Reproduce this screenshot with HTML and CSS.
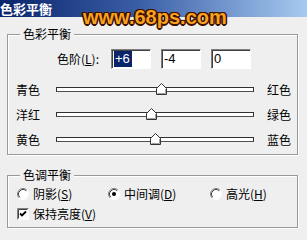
FILE: index.html
```html
<!DOCTYPE html>
<html lang="zh-CN">
<head>
<meta charset="utf-8">
<title>色彩平衡</title>
<link rel="stylesheet" href="styles.css">
</head>
<body>
<div class="window">
  <div class="titlebar">色彩平衡</div>
  <div class="watermark">www.68ps.com</div>
  <div class="dialog">
    <fieldset class="group group-color">
      <legend>色彩平衡</legend>
      <div class="levels">
        <span class="levels-label">色阶(<u>L</u>):</span>
        <div class="field"><span class="sel">+6</span></div>
        <div class="field">-4</div>
        <div class="field">0</div>
      </div>
      <div class="slider-row">
        <span class="s-left">青色</span>
        <div class="track"><div class="thumb" style="left:53%"><svg width="11" height="12" viewBox="0 0 11 12"><polygon points="5.5,0.5 10.5,5.5 10.5,11.5 0.5,11.5 0.5,5.5" fill="#fff" stroke="#333"/><polyline points="9.5,6 9.5,10.5 1.5,10.5" fill="none" stroke="#a0a0a0"/></svg></div></div>
        <span class="s-right">红色</span>
      </div>
      <div class="slider-row">
        <span class="s-left">洋红</span>
        <div class="track"><div class="thumb" style="left:48%"><svg width="11" height="12" viewBox="0 0 11 12"><polygon points="5.5,0.5 10.5,5.5 10.5,11.5 0.5,11.5 0.5,5.5" fill="#fff" stroke="#333"/><polyline points="9.5,6 9.5,10.5 1.5,10.5" fill="none" stroke="#a0a0a0"/></svg></div></div>
        <span class="s-right">绿色</span>
      </div>
      <div class="slider-row">
        <span class="s-left">黄色</span>
        <div class="track"><div class="thumb" style="left:50%"><svg width="11" height="12" viewBox="0 0 11 12"><polygon points="5.5,0.5 10.5,5.5 10.5,11.5 0.5,11.5 0.5,5.5" fill="#fff" stroke="#333"/><polyline points="9.5,6 9.5,10.5 1.5,10.5" fill="none" stroke="#a0a0a0"/></svg></div></div>
        <span class="s-right">蓝色</span>
      </div>
    </fieldset>

    <fieldset class="group group-tone">
      <legend>色调平衡</legend>
      <div class="radios">
        <div class="option">
          <svg class="radio" width="12" height="12" viewBox="0 0 12 12"><circle cx="6" cy="6" r="5" fill="#fff"/><path d="M2.11 9.89 A5.5 5.5 0 0 1 9.89 2.11" fill="none" stroke="#808080"/><path d="M2.82 9.18 A4.5 4.5 0 0 1 9.18 2.82" fill="none" stroke="#404040"/><path d="M9.89 2.11 A5.5 5.5 0 0 1 2.11 9.89" fill="none" stroke="#fff"/></svg>
          <span>阴影(<u>S</u>)</span>
        </div>
        <div class="option">
          <svg class="radio" width="12" height="12" viewBox="0 0 12 12"><circle cx="6" cy="6" r="5" fill="#fff"/><path d="M2.11 9.89 A5.5 5.5 0 0 1 9.89 2.11" fill="none" stroke="#808080"/><path d="M2.82 9.18 A4.5 4.5 0 0 1 9.18 2.82" fill="none" stroke="#404040"/><path d="M9.89 2.11 A5.5 5.5 0 0 1 2.11 9.89" fill="none" stroke="#fff"/><circle cx="6" cy="6" r="2" fill="#000"/></svg>
          <span>中间调(<u>D</u>)</span>
        </div>
        <div class="option">
          <svg class="radio" width="12" height="12" viewBox="0 0 12 12"><circle cx="6" cy="6" r="5" fill="#fff"/><path d="M2.11 9.89 A5.5 5.5 0 0 1 9.89 2.11" fill="none" stroke="#808080"/><path d="M2.82 9.18 A4.5 4.5 0 0 1 9.18 2.82" fill="none" stroke="#404040"/><path d="M9.89 2.11 A5.5 5.5 0 0 1 2.11 9.89" fill="none" stroke="#fff"/></svg>
          <span>高光(<u>H</u>)</span>
        </div>
      </div>
      <div class="check-row">
        <svg class="checkbox" width="12" height="12" viewBox="0 0 12 12"><rect x="0" y="0" width="12" height="12" fill="#fff"/><path d="M0.5 11.5 V0.5 H11.5" fill="none" stroke="#808080"/><path d="M1.5 10.5 V1.5 H10.5" fill="none" stroke="#404040"/><path d="M3 5.5 L5 7.5 L9 3.5" fill="none" stroke="#000" stroke-width="1.8"/></svg>
        <span>保持亮度(<u>V</u>)</span>
      </div>
    </fieldset>
  </div>
</div>
</body>
</html>
```

FILE: styles.css
```css
* { box-sizing: border-box; }
html, body { margin: 0; padding: 0; }
body {
  background: #efefef;
  color: #000;
  font-family: "Noto Sans CJK SC", "Liberation Sans", sans-serif;
  font-size: 12px;
  line-height: 14px;
}
.window {
  position: relative;
  width: 307px;
  height: 240px;
  overflow: hidden;
}
.titlebar {
  height: 17px;
  background: linear-gradient(90deg, #0a246a 0%, #3a5ea6 45%, #a6caf0 100%);
  color: #fff;
  font-weight: bold;
  font-size: 13px;
  line-height: 17px;
  white-space: nowrap;
}
.watermark {
  position: absolute;
  left: 83px;
  top: 7px;
  font-family: "Liberation Sans", Arial, sans-serif;
  font-weight: bold;
  font-size: 20px;
  line-height: 20px;
  color: #f9a21e;
  text-shadow:
    1.5px 0 0 #3d1000, -1.5px 0 0 #3d1000, 0 1.5px 0 #3d1000, 0 -1.5px 0 #3d1000,
    1px 1px 0 #3d1000, -1px -1px 0 #3d1000, 1px -1px 0 #3d1000, -1px 1px 0 #3d1000;
}
.dialog {
  padding: 0 9px 0 7px;
}
.group {
  margin: 0;
  padding: 0;
  min-width: 0;
  border: 1px solid #9a9a9a;
  box-shadow: inset 1px 1px #fff, 1px 1px #fff;
}
.group legend {
  margin-left: 12px;
  padding: 0 3px;
  line-height: 14px;
  background: #efefef;
}
.group-color {
  margin-top: 10px;
  padding-bottom: 2px;
}
.group-tone {
  margin-top: 13px;
  padding-bottom: 6px;
}
.levels {
  display: flex;
  align-items: center;
  height: 20px;
  margin-top: 8px;
  padding-left: 49px;
}
.levels-label {
  width: 54px;
}
.field {
  width: 40px;
  height: 20px;
  margin-right: 10px;
  background: #fff;
  border-top: 1px solid #808080;
  border-left: 1px solid #808080;
  border-right: 1px solid #fff;
  border-bottom: 1px solid #fff;
  box-shadow: inset 1px 1px #404040;
  padding: 1px 0 0 2px;
  font-family: "Liberation Sans", Arial, sans-serif;
  font-size: 13px;
  line-height: 16px;
}
.sel {
  display: inline-block;
  background: #0a246a;
  color: #fff;
  padding: 0 2px 0 1px;
}
.slider-row {
  display: grid;
  grid-template-columns: 40px 198px auto;
  align-items: center;
  height: 25px;
  padding-left: 8px;
}
.group-color .slider-row:first-of-type { margin-top: 8px; }
.levels + .slider-row { margin-top: 8px; }
.s-right { margin-left: 13px; }
.track {
  position: relative;
  height: 5px;
  background: #fff;
  border: 1px solid #303030;
  border-bottom-color: #505050;
}
.thumb {
  position: absolute;
  top: -5px;
  width: 11px;
  height: 12px;
  margin-left: -5px;
}
.thumb svg { display: block; }
.radios {
  display: grid;
  grid-template-columns: 91px 102px auto;
  align-items: center;
  height: 14px;
  margin-top: 5px;
  padding-left: 9px;
}
.option {
  display: flex;
  align-items: center;
  gap: 4px;
}
.radio, .checkbox { display: block; flex: none; }
.check-row {
  display: flex;
  align-items: center;
  gap: 4px;
  height: 14px;
  margin-top: 6px;
  padding-left: 9px;
}
```
